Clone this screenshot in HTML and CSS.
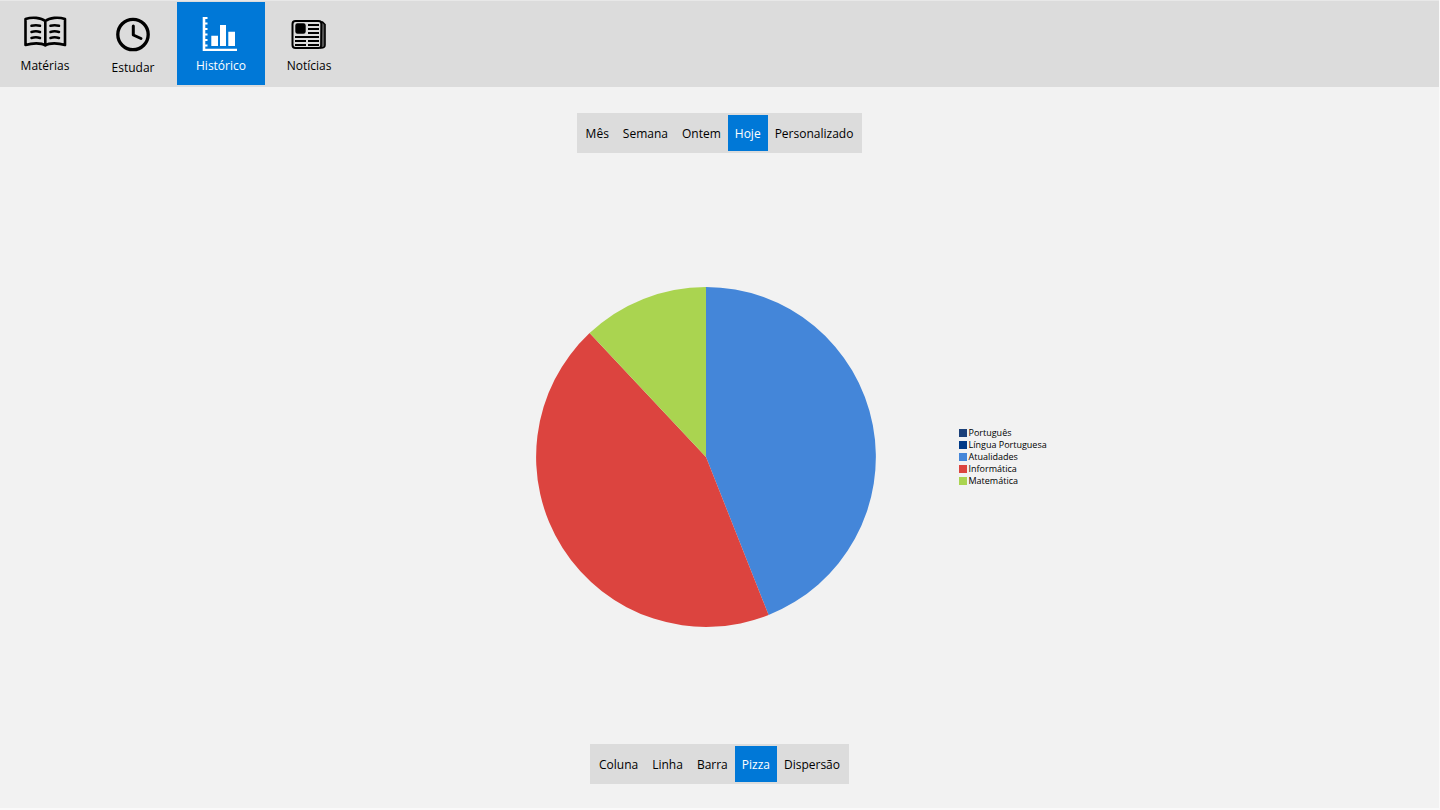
FILE: index.html
```
<!DOCTYPE html>
<html lang="pt-BR">
<head>
    <meta charset="UTF-8">
    <meta name="viewport" content="width=device-width, initial-scale=1.0">
    <title>Histórico</title>
    <link rel="stylesheet" href="styles.css">
</head>
<body>
    <header>
        <nav class="tabs">
            <button type="button" class="tab">
                <svg class="icon" viewBox="0 0 44 45" fill="none" stroke="#000">
                    <path stroke-width="2.6" stroke-linejoin="round" d="M22.300 9C18 5.500 9 4.800 2.500 7V33C9 31 18 30.500 22.300 33.500C26.500 30.500 35.500 31 42 33V7C35.500 4.800 26.500 5.500 22.300 9ZM22.300 9V33"/>
                    <path stroke-width="2.500" stroke-linecap="round" d="M8.500 13.800Q13 12.500 17 13.800M8.500 20Q13 18.700 17 20M8.500 26Q13 24.700 17 26M27.500 13.800Q31.500 12.500 36 13.800M27.500 20Q31.500 18.700 36 20M27.500 26Q31.500 24.700 36 26"/>
                </svg>
                <span>Matérias</span>
            </button>
            <button type="button" class="tab">
                <svg class="icon icon-tall" viewBox="0 0 44 49" fill="none" stroke="#000">
                    <circle cx="22" cy="24.500" r="15.200" stroke-width="3.300"/>
                    <path stroke-width="3" stroke-linecap="round" stroke-linejoin="round" d="M22.300 16V25L30 28.500"/>
                </svg>
                <span>Estudar</span>
            </button>
            <button type="button" class="tab active">
                <svg class="icon" viewBox="0 0 44 45" fill="#fff">
                    <path d="M3.700 5H8.500V7H6.300V10.500H8.500V12.500H6.300V16H8.500V18H6.300V21.500H8.500V23.500H6.300V27H8.500V29H6.300V32.500H8.500V34.500H6.300V36.700H38V39H3.700Z"/>
                    <path d="M12.300 23.700H19V34H12.300ZM21 13H27V34H21ZM29.300 19.700H36V34H29.300Z"/>
                </svg>
                <span>Histórico</span>
            </button>
            <button type="button" class="tab">
                <svg class="icon" viewBox="0 0 44 45" fill="none" stroke="#000">
                    <rect x="5.500" y="9" width="29" height="27" rx="3" stroke-width="2"/>
                    <path fill="#555" stroke-width="1.600" d="M34.500 10H35.500L38 12.500V33Q38 36 34 36Z"/>
                    <rect x="9" y="12" width="9" height="9" rx="1.500" fill="#000" stroke-width="1.400"/>
                    <path stroke-width="2" d="M21 13H32M21 17H32M21 21H32M8 25H32M8 29H19M8 33H19M21 29H32M21 33H32"/>
                </svg>
                <span>Notícias</span>
            </button>
        </nav>
    </header>

    <main>
        <div class="switch">
            <button type="button">Mês</button>
            <button type="button">Semana</button>
            <button type="button">Ontem</button>
            <button type="button" class="active">Hoje</button>
            <button type="button">Personalizado</button>
        </div>

        <section class="chart">
            <svg class="pie" viewBox="-170 -170 340 340" role="img" aria-label="Horas por matéria">
                <path fill="#4486d9" d="M0 0V-170A170 170 0 0 1 62.600 158Z"/>
                <path fill="#dc443f" d="M0 0L62.600 158A170 170 0 0 1 -116.400 -123.900Z"/>
                <path fill="#aad450" d="M0 0L-116.400 -123.900A170 170 0 0 1 0 -170Z"/>
            </svg>
            <ul class="legend">
                <li class="portugues">Português</li>
                <li class="lingua">Língua Portuguesa</li>
                <li class="atualidades">Atualidades</li>
                <li class="informatica">Informática</li>
                <li class="matematica">Matemática</li>
            </ul>
        </section>

        <div class="switch">
            <button type="button">Coluna</button>
            <button type="button">Linha</button>
            <button type="button">Barra</button>
            <button type="button" class="active">Pizza</button>
            <button type="button">Dispersão</button>
        </div>
    </main>
</body>
</html>
```
FILE: styles.css
```
/* Global Styles */
* {
    box-sizing: border-box;
}

body {
    display: flex;
    flex-direction: column;
    min-height: 100vh;
    margin: 0;
    border-right: 1px solid #fafafa;
    border-bottom: 2px solid #fafafa;
    background-color: #f2f2f2;
    color: black;
    font-family: "Open Sans", "Noto Sans", sans-serif;
    font-size: 12px;
}

button {
    border: none;
    background: none;
    color: inherit;
    font: inherit;
    cursor: pointer;
}

button.active {
    background-color: #0078d7;
    color: white;
}

/* Header */
header {
    padding: 1px 0 2px 1px;
    border-top: 1px solid #e8e8e8;
    background-color: #dcdcdc;
}

.tabs {
    display: flex;
}

.tab {
    display: flex;
    flex-direction: column;
    align-items: center;
    justify-content: center;
    width: 88px;
    height: 83px;
    padding: 0;
    line-height: 18px;
}

.icon {
    width: 44px;
    height: 45px;
}

.icon-tall {
    height: 49px;
}

/* Main */
main {
    flex: 1;
    display: flex;
    flex-direction: column;
    align-items: center;
    padding: 26px 0 24px;
}

.switch {
    display: flex;
    padding: 2px;
    background-color: #dcdcdc;
}

.switch button {
    height: 36px;
    padding: 0 7px;
}

/* Chart */
.chart {
    flex: 1;
    display: grid;
    grid-template-columns: 1fr 340px 1fr;
    align-items: center;
    width: 100%;
    padding: 16px 28px 0 0;
}

.pie {
    grid-column: 2;
    width: 100%;
}

.legend {
    margin: 0 0 0 83px;
    padding: 0;
    list-style: none;
    font-size: 9px;
    line-height: 12px;
}

.legend li {
    display: flex;
    align-items: center;
    gap: 2px;
}

.legend li::before {
    content: "";
    width: 8px;
    height: 8px;
    background-color: currentColor;
}

.legend .portugues::before { background-color: #1b4079; }
.legend .lingua::before { background-color: #003a88; }
.legend .atualidades::before { background-color: #4486d9; }
.legend .informatica::before { background-color: #dc443f; }
.legend .matematica::before { background-color: #aad450; }
```
